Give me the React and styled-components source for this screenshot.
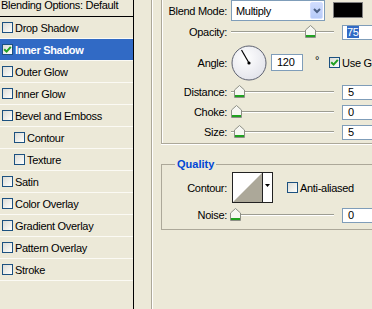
import React from "react";
import styled, { createGlobalStyle } from "styled-components";

const GlobalStyle = createGlobalStyle`
  html, body {
    margin: 0;
    padding: 0;
    background: #ece9d8;
  }
  body {
    font-family: "Liberation Sans", Arial, sans-serif;
    font-size: 11px;
    letter-spacing: -0.3px;
    color: #000;
  }
`;

const Window = styled.div`
  display: flex;
  width: 372px;
  height: 309px;
  overflow: hidden;
  background: #ece9d8;
`;

/* ---------- left: style list ---------- */

const StyleList = styled.div`
  width: 133px;
  flex: none;
  border-right: 1px solid #000;
  display: flex;
  flex-direction: column;
`;

const ListHeader = styled.div`
  height: 16px;
  line-height: 11px;
  padding-left: 1px;
  border-bottom: 1px solid #000;
  white-space: nowrap;
`;

const ListItem = styled.div`
  display: flex;
  align-items: center;
  gap: 2px;
  height: 21px;
  padding-left: ${(p) => (p.$nested ? 14 : 2)}px;
  border-bottom: 1px solid #fbfaf4;
  background: ${(p) => (p.$selected ? "#316ac5" : "transparent")};
  color: ${(p) => (p.$selected ? "#fff" : "#000")};
  font-weight: ${(p) => (p.$selected ? 700 : 400)};
  white-space: nowrap;
`;

const Box = styled.span`
  width: 11px;
  height: 11px;
  box-sizing: border-box;
  flex: none;
  border: 1px solid #1c5180;
  background: linear-gradient(135deg, #dcdcd7 0%, #f4f4f0 70%, #fff 100%);
  display: inline-flex;
  align-items: center;
  justify-content: center;
`;

function Checkbox({ checked }) {
  return (
    <Box>
      {checked && (
        <svg width="9" height="9" viewBox="0 0 9 9">
          <path d="M1.2 4.2 L3.6 6.6 L7.8 1.8" stroke="#21a121" strokeWidth="2" fill="none" />
        </svg>
      )}
    </Box>
  );
}

/* ---------- right: settings ---------- */

const Settings = styled.div`
  flex: none;
  width: 260px;
  padding-left: 17px;
`;

const OuterGroup = styled.div`
  height: 100%;
  border-left: 1px solid #aca899;
  box-shadow: inset 1px 0 #fff;
  padding-left: 9px;
`;

const Structure = styled.div`
  border-left: 1px solid #aca899;
  border-bottom: 1px solid #aca899;
  box-shadow: inset 1px 0 #fff, 0 1px #fff;
  padding-bottom: 1px;
`;

const Quality = styled.fieldset`
  margin: 14px 0 0 0;
  padding: 0 0 3px 0;
  border: 1px solid #aca899;
  border-right: none;
  min-inline-size: 0;
`;

const Legend = styled.legend`
  margin-left: 13px;
  padding: 0 2px;
  line-height: 13px;
  font-weight: 700;
  color: #0046d5;
  letter-spacing: 0;
`;

const Row = styled.div`
  display: flex;
  align-items: center;
  height: ${(p) => p.$h}px;
  margin-top: ${(p) => p.$mt || 0}px;
  white-space: nowrap;
`;

const Label = styled.span`
  width: 65px;
  flex: none;
  margin-right: 4px;
  text-align: right;
`;

const Select = styled.div`
  width: 94px;
  height: 21px;
  box-sizing: border-box;
  flex: none;
  margin-right: 8px;
  border: 1px solid #7f9db9;
  background: #fff;
  display: flex;
  align-items: center;
  justify-content: space-between;
  padding: 1px 1px 1px 4px;
`;

const DropButton = styled.span`
  width: 13px;
  height: 17px;
  box-sizing: border-box;
  border: 1px solid #d3deff;
  border-radius: 2px;
  background: linear-gradient(#d0dcfd, #b7cbf8);
  display: flex;
  align-items: center;
  justify-content: center;
`;

const Swatch = styled.div`
  width: 30px;
  height: 16px;
  box-sizing: border-box;
  flex: none;
  margin-top: -2px;
  border: 1px solid #808080;
  background: #000;
`;

const SliderTrack = styled.div`
  position: relative;
  width: 103px;
  height: 14px;
  flex: none;
  margin-right: 8px;
  &::before {
    content: "";
    position: absolute;
    left: 0;
    right: 0;
    top: 6px;
    border-top: 1px solid #9d9d92;
    border-bottom: 1px solid #fff;
  }
`;

const Thumb = styled.svg`
  position: absolute;
  top: 0;
`;

function Slider({ pos }) {
  return (
    <SliderTrack>
      <Thumb width="11" height="13" viewBox="0 0 11 13" style={{ left: pos }}>
        <path d="M0.5 5 L5.5 0.5 L10.5 5 V12.5 H0.5 Z" fill="#f7f7f2" stroke="#8d8f86" />
        <rect x="1" y="10" width="9" height="2" fill="#21a121" />
      </Thumb>
    </SliderTrack>
  );
}

const NumField = styled.div`
  width: ${(p) => p.$w || 40}px;
  height: ${(p) => p.$h || 15}px;
  line-height: ${(p) => (p.$h || 15) - 2}px;
  box-sizing: border-box;
  flex: none;
  border: 1px solid #7f9db9;
  background: #fff;
  padding-left: ${(p) => p.$pad || 5}px;
`;

const Highlight = styled.span`
  background: #316ac5;
  color: #fff;
`;

const Degree = styled.span`
  margin: -6px 10px 0 12px;
  width: 5px;
`;

const CheckLabel = styled.span`
  display: flex;
  align-items: center;
  gap: 2px;
`;

const Contour = styled.div`
  display: flex;
  width: 41px;
  height: 31px;
  box-sizing: border-box;
  flex: none;
  margin: 0 14px 0 1px;
  border: 1px solid #222;
  background: #fff;
`;

const ContourArrow = styled.div`
  flex: 1;
  border-left: 1px solid #222;
  display: flex;
  align-items: center;
  justify-content: center;
  padding-bottom: 5px;
`;

function Dial() {
  return (
    <svg width="36" height="36" viewBox="0 0 36 36" style={{ flex: "none", marginRight: 4 }}>
      <defs>
        <radialGradient id="dialFill" cx="40%" cy="35%" r="70%">
          <stop offset="0%" stopColor="#ffffff" />
          <stop offset="100%" stopColor="#e2e3ea" />
        </radialGradient>
      </defs>
      <circle cx="18" cy="18" r="17" fill="url(#dialFill)" stroke="#5d6170" strokeWidth="1" />
      <line x1="18" y1="18" x2="10.5" y2="5" stroke="#000" strokeWidth="1.2" />
      <circle cx="18" cy="18" r="1.6" fill="#000" />
    </svg>
  );
}

const styles = [
  { name: "Drop Shadow" },
  { name: "Inner Shadow", checked: true, selected: true },
  { name: "Outer Glow" },
  { name: "Inner Glow" },
  { name: "Bevel and Emboss" },
  { name: "Contour", nested: true },
  { name: "Texture", nested: true },
  { name: "Satin" },
  { name: "Color Overlay" },
  { name: "Gradient Overlay" },
  { name: "Pattern Overlay" },
  { name: "Stroke" },
];

export default function App() {
  return (
    <>
      <GlobalStyle />
      <Window>
        <StyleList>
          <ListHeader>Blending Options: Default</ListHeader>
          {styles.map((s) => (
            <ListItem key={s.name} $nested={s.nested} $selected={s.selected}>
              <Checkbox checked={s.checked} />
              {s.name}
            </ListItem>
          ))}
        </StyleList>

        <Settings>
          <OuterGroup>
            <Structure>
              <Row $h={21}>
                <Label>Blend Mode:</Label>
                <Select>
                  Multiply
                  <DropButton>
                    <svg width="8" height="6" viewBox="0 0 8 6">
                      <path d="M1 1 L4 4 L7 1" stroke="#4d6185" strokeWidth="2" fill="none" />
                    </svg>
                  </DropButton>
                </Select>
                <Swatch />
              </Row>
              <Row $h={22}>
                <Label>Opacity:</Label>
                <Slider pos={74} />
                <NumField $pad={4}>
                  <Highlight>75</Highlight>
                </NumField>
              </Row>
              <Row $h={39}>
                <Label>Angle:</Label>
                <Dial />
                <NumField $w={32} $h={17}>
                  120
                </NumField>
                <Degree>°</Degree>
                <CheckLabel>
                  <Checkbox checked />
                  Use Global Light
                </CheckLabel>
              </Row>
              <Row $h={20}>
                <Label>Distance:</Label>
                <Slider pos={3} />
                <NumField>5</NumField>
              </Row>
              <Row $h={20}>
                <Label>Choke:</Label>
                <Slider pos={0} />
                <NumField>0</NumField>
              </Row>
              <Row $h={20}>
                <Label>Size:</Label>
                <Slider pos={3} />
                <NumField>5</NumField>
              </Row>
            </Structure>

            <Quality>
              <Legend>Quality</Legend>
              <Row $h={31} $mt={1}>
                <Label>Contour:</Label>
                <Contour>
                  <svg width="29" height="29" viewBox="0 0 29 29">
                    <polygon points="0,29 29,0 29,29" fill="#aca899" />
                  </svg>
                  <ContourArrow>
                    <svg width="5" height="3" viewBox="0 0 5 3">
                      <polygon points="0,0 5,0 2.5,3" fill="#000" />
                    </svg>
                  </ContourArrow>
                </Contour>
                <CheckLabel>
                  <Checkbox />
                  Anti-aliased
                </CheckLabel>
              </Row>
              <Row $h={22} $mt={1}>
                <Label>Noise:</Label>
                <Slider pos={-1} />
                <NumField>0</NumField>
              </Row>
            </Quality>
          </OuterGroup>
        </Settings>
      </Window>
    </>
  );
}
